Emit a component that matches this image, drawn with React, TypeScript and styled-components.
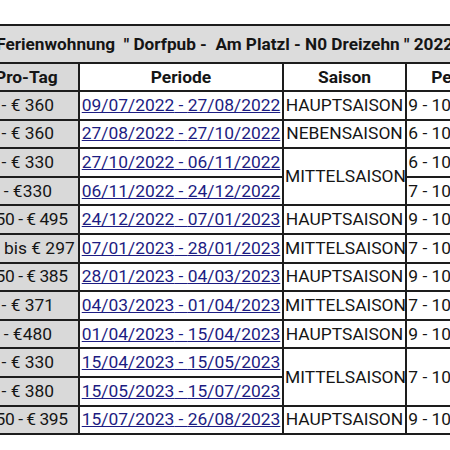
import React from "react";
import styled, { createGlobalStyle } from "styled-components";

const GlobalStyle = createGlobalStyle`
  html, body {
    margin: 0;
    padding: 0;
    background: #ffffff;
  }
  body {
    font-family: Roboto, "Liberation Sans", sans-serif;
  }
`;

type Row = {
  price: string;
  from: string;
  to: string;
  season?: string;
  seasonSpan?: number;
  persons?: string;
  personsSpan?: number;
};

const rows: Row[] = [
  { price: "€ 180 - € 360", from: "09/07/2022", to: "27/08/2022", season: "HAUPTSAISON", persons: "9 - 10 Personen" },
  { price: "€ 180 - € 360", from: "27/08/2022", to: "27/10/2022", season: "NEBENSAISON", persons: "6 - 10 Personen" },
  { price: "€ 165 - € 330", from: "27/10/2022", to: "06/11/2022", season: "MITTELSAISON", seasonSpan: 2, persons: "6 - 10 Personen" },
  { price: "€ 165 - €330", from: "06/11/2022", to: "24/12/2022", persons: "7 - 10 Personen" },
  { price: "€ 247,50 - € 495", from: "24/12/2022", to: "07/01/2023", season: "HAUPTSAISON", persons: "9 - 10 Personen" },
  { price: "€ 148,50 bis € 297", from: "07/01/2023", to: "28/01/2023", season: "MITTELSAISON", persons: "7 - 10 Personen" },
  { price: "€ 192,50 - € 385", from: "28/01/2023", to: "04/03/2023", season: "HAUPTSAISON", persons: "9 - 10 Personen" },
  { price: "€ 186 - € 371", from: "04/03/2023", to: "01/04/2023", season: "MITTELSAISON", persons: "7 - 10 Personen" },
  { price: "€ 240 - €480", from: "01/04/2023", to: "15/04/2023", season: "HAUPTSAISON", persons: "9 - 10 Personen" },
  { price: "€ 165 - € 330", from: "15/04/2023", to: "15/05/2023", season: "MITTELSAISON", seasonSpan: 2, persons: "7 - 10 Personen", personsSpan: 2 },
  { price: "€ 190 - € 380", from: "15/05/2023", to: "15/07/2023" },
  { price: "€ 197,50 - € 395", from: "15/07/2023", to: "26/08/2023", season: "HAUPTSAISON", persons: "9 - 10 Personen" },
];

export default function App() {
  return (
    <>
      <GlobalStyle />
      <Viewport>
        <PriceTable>
          <colgroup>
            <col style={{ width: 150 }} />
            <col style={{ width: 204 }} />
            <col style={{ width: 123 }} />
            <col style={{ width: 125 }} />
          </colgroup>
          <tbody>
            <TitleRow>
              <TitleCell colSpan={4}>
                {'Ferienwohnung  " Dorfpub -  Am Platzl - N0 Dreizehn " 2022 - 2023'}
              </TitleCell>
            </TitleRow>
            <HeadRow>
              <HeadCell $shaded>Preis Pro-Tag</HeadCell>
              <HeadCell>Periode</HeadCell>
              <HeadCell>Saison</HeadCell>
              <HeadCell>Personen</HeadCell>
            </HeadRow>
            {rows.map((r) => (
              <DataRow key={r.from}>
                <PriceCell $tight={r.price.includes(",50 -")}>{r.price}</PriceCell>
                <Cell>
                  <PeriodLink href="#">
                    {r.from} - {r.to}
                  </PeriodLink>
                </Cell>
                {r.season && <Cell rowSpan={r.seasonSpan ?? 1}>{r.season}</Cell>}
                {r.persons && <Cell rowSpan={r.personsSpan ?? 1}>{r.persons}</Cell>}
              </DataRow>
            ))}
          </tbody>
        </PriceTable>
      </Viewport>
    </>
  );
}

const Viewport = styled.div`
  width: 450px;
  height: 450px;
  overflow: hidden;
  background: #ffffff;
  padding-top: 24px;
  box-sizing: border-box;
`;

const PriceTable = styled.table`
  margin-left: -72px;
  width: 602px;
  table-layout: fixed;
  border-collapse: collapse;
  border: 2px solid #1d1d1d;
  font-size: 17.4px;
  color: #151515;
`;

const TitleRow = styled.tr`
  height: 38px;
`;

const TitleCell = styled.td`
  background: #dcdcdc;
  border: 2px solid #1d1d1d;
  font-size: 17.2px;
  font-weight: 700;
  text-align: center;
  white-space: pre;
  padding: 0 0 0 44px;
`;

const HeadRow = styled.tr`
  height: 28px;
`;

const HeadCell = styled.td<{ $shaded?: boolean }>`
  background: ${(p) => (p.$shaded ? "#d9d9d9" : "#ffffff")};
  border: 2px solid #1d1d1d;
  font-weight: 700;
  text-align: center;
  white-space: nowrap;
  padding: 0;
`;

const DataRow = styled.tr`
  height: 28.6px;
`;

const Cell = styled.td`
  background: #ffffff;
  border: 2px solid #1d1d1d;
  text-align: center;
  white-space: nowrap;
  padding: 0 1px;
  line-height: 1.2;
`;

const PriceCell = styled(Cell)<{ $tight?: boolean }>`
  background: #d9d9d9;
  letter-spacing: ${(p) => (p.$tight ? "-0.45px" : "normal")};
  padding-left: ${(p) => (p.$tight ? "12px" : "1px")};
`;

const PeriodLink = styled.a`
  color: #1c1c82;
  text-decoration: underline;
`;
